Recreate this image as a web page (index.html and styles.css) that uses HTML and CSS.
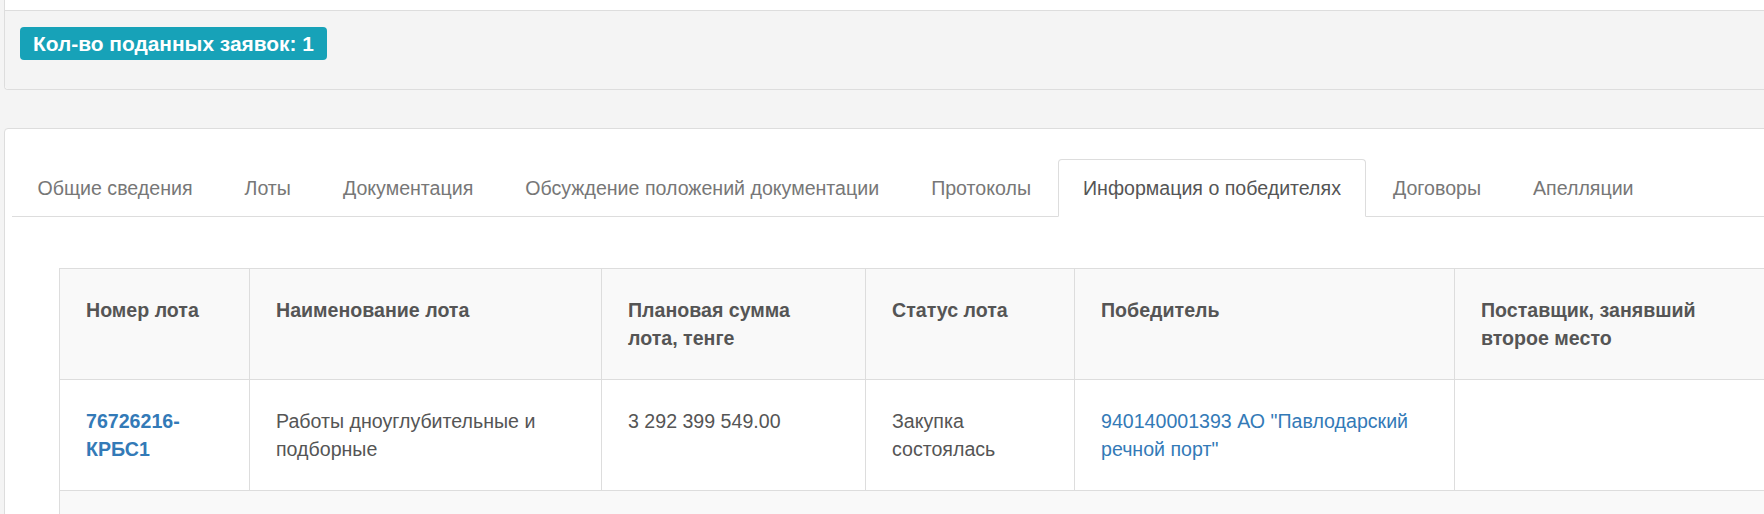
FILE: index.html
```html
<!DOCTYPE html>
<html lang="ru">
<head>
<meta charset="utf-8">
<title>Информация о победителях</title>
<link rel="stylesheet" href="styles.css">
</head>
<body>
<div class="page">
  <div class="panel panel-top">
    <div class="panel-body-top"></div>
    <div class="panel-footer">
      <span class="badge">Кол-во поданных заявок: 1</span>
    </div>
  </div>

  <div class="panel panel-main">
    <ul class="tabs">
      <li><a>Общие сведения</a></li>
      <li><a>Лоты</a></li>
      <li><a>Документация</a></li>
      <li><a>Обсуждение положений документации</a></li>
      <li><a>Протоколы</a></li>
      <li class="active"><a>Информация о победителях</a></li>
      <li><a>Договоры</a></li>
      <li><a>Апелляции</a></li>
    </ul>
    <div class="tab-content">
      <table class="lots">
        <colgroup>
          <col class="col-num">
          <col class="col-name">
          <col class="col-sum">
          <col class="col-status">
          <col class="col-winner">
          <col class="col-second">
        </colgroup>
        <thead>
          <tr>
            <th>Номер лота</th>
            <th>Наименование лота</th>
            <th>Плановая сумма лота, тенге</th>
            <th>Статус лота</th>
            <th>Победитель</th>
            <th>Поставщик, занявший второе место</th>
          </tr>
        </thead>
        <tbody>
          <tr>
            <td><a class="lot-link">76726216-КРБС1</a></td>
            <td>Работы дноуглубительные и подборные</td>
            <td>3 292 399 549.00</td>
            <td>Закупка состоялась</td>
            <td><a class="winner-link">940140001393 АО "Павлодарский речной порт"</a></td>
            <td></td>
          </tr>
          <tr class="striped">
            <td colspan="6"></td>
          </tr>
        </tbody>
      </table>
    </div>
  </div>
</div>
</body>
</html>
```

FILE: styles.css
```css
html, body {
  margin: 0;
  padding: 0;
  overflow: hidden;
}
body {
  background: #f4f4f4;
  font-family: "Liberation Sans", Arial, sans-serif;
  font-size: 19.6px;
  line-height: 28px;
  color: #555;
}
.page {
  width: 2100px;
  padding-left: 4px;
}
.panel {
  border: 1px solid #ddd;
  background: #fff;
}
.panel-top {
  border-top: none;
  border-radius: 0 0 4px 4px;
  margin-bottom: 38px;
}
.panel-body-top {
  height: 10px;
  background: #fff;
}
.panel-footer {
  background: #f4f4f4;
  border-top: 1px solid #ddd;
  border-radius: 0 0 4px 4px;
  padding: 16px 15px 29px;
  height: 33px;
}
.badge {
  display: inline-block;
  background: #17a2b8;
  color: #fff;
  font-weight: bold;
  font-size: 20.9px;
  line-height: 21px;
  padding: 6px 13px;
  border-radius: 4px;
}
.panel-main {
  border-radius: 4px 4px 0 0;
  padding: 30px 0 0 7px;
  min-height: 420px;
}
.tabs {
  list-style: none;
  margin: 0;
  padding: 0 0 0 0.5px;
  display: flex;
  border-bottom: 1px solid #ddd;
}
.tabs li {
  margin-bottom: -1px;
}
.tabs a {
  display: block;
  padding: 14px 24px;
  margin-right: 2px;
  border: 1px solid transparent;
  border-radius: 4px 4px 0 0;
  color: #777;
}
.tabs .active a {
  color: #555;
  background: #fff;
  border-color: #ddd #ddd transparent;
}
.tab-content {
  padding: 51px 0 0 47px;
}
.lots {
  border-collapse: collapse;
  table-layout: fixed;
  width: 1715px;
}
.col-num { width: 190px; }
.col-name { width: 352px; }
.col-sum { width: 264px; }
.col-status { width: 209px; }
.col-winner { width: 380px; }
.col-second { width: 320px; }
.lots th, .lots td {
  border: 1px solid #ddd;
  padding: 27px 26px;
  text-align: left;
  vertical-align: top;
}
.lots th {
  background: #f9f9f9;
  font-weight: bold;
  color: #555;
}
.lots td {
  background: #fff;
}
.lots .striped td {
  background: #f9f9f9;
  height: 28px;
}
.lot-link {
  color: #337ab7;
  font-weight: bold;
}
.winner-link {
  color: #337ab7;
}
```
